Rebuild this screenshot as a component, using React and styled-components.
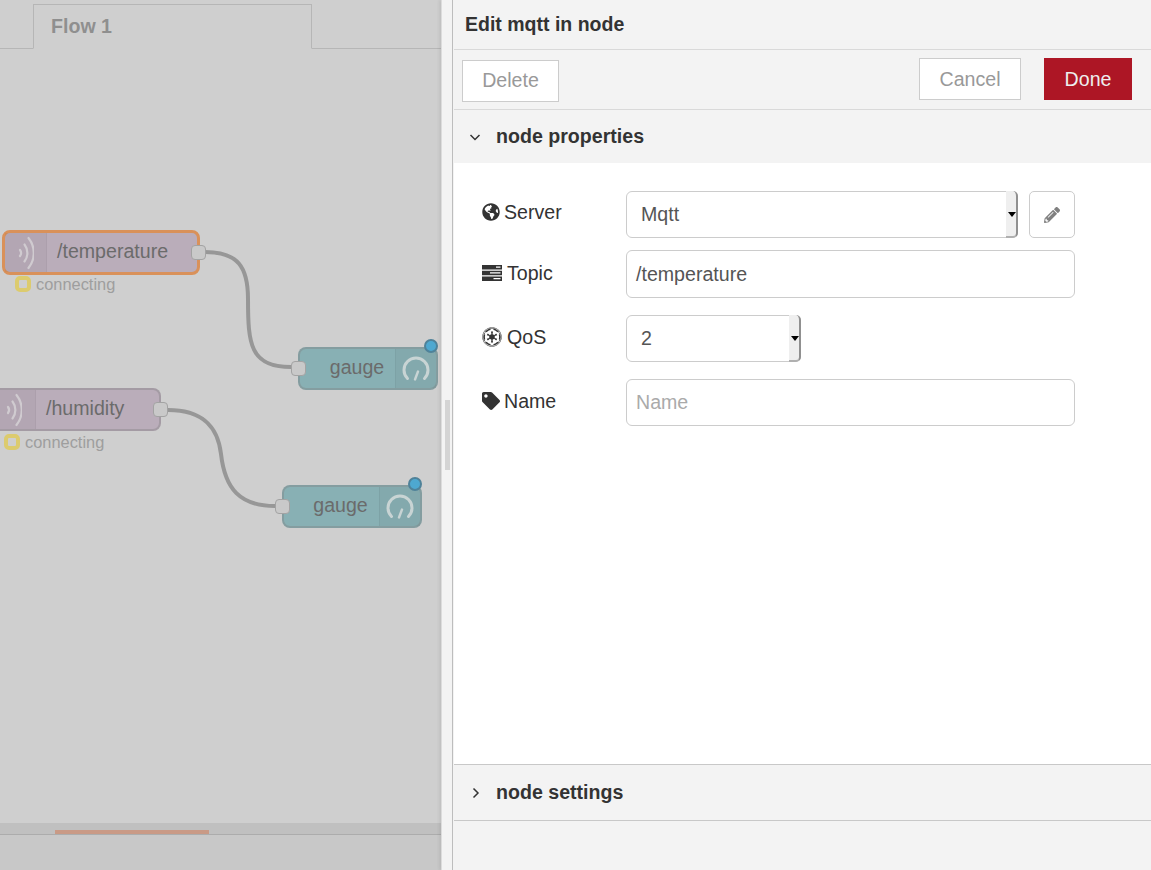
import React from "react";
import styled, { createGlobalStyle } from "styled-components";
import { FaGlobeAmericas, FaEmpire, FaTag, FaPencilAlt } from "react-icons/fa";

const Global = createGlobalStyle`
  html, body { margin: 0; padding: 0; height: 100%; overflow: hidden; }
  body { font-family: "Liberation Sans", Arial, sans-serif; color: #333; }
  * { box-sizing: border-box; }
`;

const Page = styled.div`
  display: flex;
  width: 1151px;
  height: 870px;
  overflow: hidden;
`;

const Workspace = styled.div`
  width: 441px;
  display: flex;
  flex-direction: column;
  background: #cfcfcf;
`;

const TabBar = styled.div`
  height: 49px;
  padding: 4px 0 0 33px;
  border-bottom: 1px solid #b6b6b6;
  display: flex;
`;

const Tab = styled.div`
  width: 279px;
  height: 45px;
  border: 1px solid #b6b6b6;
  border-bottom: 1px solid #cfcfcf;
  padding: 9px 0 0 17px;
  font-size: 19.6px;
  font-weight: 700;
  line-height: 24px;
  color: #8f8f8f;
`;

const Canvas = styled.div`
  position: relative;
  flex: 1;
  overflow: hidden;
  background: #cfcfcf;
`;

const Wires = styled.svg`
  position: absolute;
  left: 0;
  top: 0;
`;

const Node = styled.div`
  position: absolute;
  display: flex;
  border-radius: 8px;
  background: ${(p) => p.$bg};
  border: ${(p) => (p.$selected ? "3px solid #d9915a" : "2px solid rgba(125, 125, 125, 0.36)")};
  color: #6b6b6b;
  font-size: 19.6px;
  line-height: 1;
  align-items: stretch;
`;

const IconCell = styled.div`
  width: ${(p) => p.$w}px;
  flex: none;
  display: flex;
  align-items: center;
  justify-content: center;
  background: rgba(0, 0, 0, 0.035);
  border-${(p) => p.$side}: 1px solid rgba(0, 0, 0, 0.04);
`;

const NodeLabel = styled.div`
  flex: 1;
  display: flex;
  align-items: center;
  justify-content: ${(p) => p.$justify || "flex-start"};
  padding-left: ${(p) => p.$pad || 0}px;
  padding-bottom: 2px;
  white-space: nowrap;
`;

const Port = styled.div`
  position: absolute;
  width: 15px;
  height: 15px;
  border-radius: 4px;
  background: #c9c9c9;
  border: 1px solid #a3a3a3;
  top: 50%;
  margin-top: -8px;
  ${(p) => (p.$side === "left" ? "left: -9px;" : "right: -9px;")}
`;

const Badge = styled.div`
  position: absolute;
  width: 14px;
  height: 14px;
  border-radius: 50%;
  background: #4ea8d0;
  border: 2px solid #4f8299;
  top: -10px;
  right: -2px;
`;

const Status = styled.div`
  position: absolute;
  display: flex;
  align-items: center;
  gap: 5px;
  font-size: 16.4px;
  line-height: 16px;
  color: #9e9e9e;
`;

const StatusDot = styled.div`
  width: 16px;
  height: 16px;
  border-radius: 5px;
  background: #cfcfcf;
  border: 4px solid #dccb6e;
`;

const ScrollTrack = styled.div`
  height: 12px;
  background: #c0c0c0;
  border-bottom: 1px solid #acacac;
  padding: 7px 0 0 55px;
`;

const ScrollThumb = styled.div`
  width: 154px;
  height: 4px;
  background: #c99a86;
`;

const BottomBar = styled.div`
  height: 35px;
  background: #c8c8c8;
`;

const Divider = styled.div`
  position: relative;
  width: 12px;
  background: #f3f3f3;
  border-left: 1px solid #dcdcdc;
  border-right: 1px solid #bdbdbd;
  box-shadow: -2px 0 3px rgba(0, 0, 0, 0.07);
`;

const Handle = styled.div`
  position: absolute;
  left: 3px;
  top: 400px;
  width: 5px;
  height: 70px;
  background: #d4d4d4;
`;

const Editor = styled.div`
  flex: 1;
  display: flex;
  flex-direction: column;
  background: #f3f3f3;
  padding-left: 1px;
`;

const Title = styled.div`
  height: 50px;
  padding: 0 0 0 11px;
  display: flex;
  align-items: center;
  font-size: 19.5px;
  font-weight: 700;
  color: #333;
  border-bottom: 1px solid #d9d9d9;
`;

const Toolbar = styled.div`
  height: 60px;
  display: flex;
  padding: 8px 19px 0 8px;
  border-bottom: 1px solid #d9d9d9;
`;

const Button = styled.button`
  font: inherit;
  font-size: 19.6px;
  height: 42px;
  width: ${(p) => p.$w}px;
  margin-top: ${(p) => p.$top || 0}px;
  margin-left: ${(p) => p.$left || 0}px;
  border: 1px solid ${(p) => (p.$primary ? "#ad1625" : "#cccccc")};
  background: ${(p) => (p.$primary ? "#ad1625" : "#ffffff")};
  color: ${(p) => (p.$primary ? "#eeeeee" : "#999999")};
  padding: 0 0 ${(p) => p.$top || 0}px 0;
`;

const Spacer = styled.div`
  flex: 1;
`;

const SectionHeader = styled.div`
  display: flex;
  align-items: center;
  height: ${(p) => p.$h}px;
  padding-left: 14px;
  gap: 14px;
  font-size: 19.6px;
  font-weight: 700;
  color: #333;
`;

const Chevron = styled.svg`
  width: 14px;
  height: 14px;
  flex: none;
`;

const Form = styled.div`
  flex: 1;
  background: #ffffff;
  padding: 28px 0 0 28px;
  border-bottom: 1px solid #c8c8c8;
`;

const Row = styled.div`
  display: flex;
  align-items: flex-start;
  margin-bottom: ${(p) => p.$mb}px;
`;

const Label = styled.div`
  width: 144px;
  flex: none;
  display: flex;
  align-items: center;
  height: 20px;
  gap: ${(p) => p.$gap || 4}px;
  margin-top: ${(p) => p.$top}px;
  font-size: 19.6px;
  color: #333;
  svg { flex: none; }
`;

const Field = styled.div`
  width: ${(p) => p.$w}px;
  height: ${(p) => p.$h || 47}px;
  border: 1px solid #cccccc;
  border-radius: 6px;
  background: #fff;
  display: flex;
  align-items: center;
  padding-left: ${(p) => p.$pad}px;
  font-size: 19.6px;
  color: ${(p) => (p.$placeholder ? "#aaaaaa" : "#555555")};
`;

const SelectValue = styled.div`
  flex: 1;
`;

const SelectArrow = styled.div`
  position: relative;
  width: 12px;
  height: 47px;
  margin: -1px -1px -1px 0;
  flex: none;
  background: #efefef;
  border-right: 2px solid #909090;
  border-bottom: 2px solid #b0b0b0;
  border-radius: 0 5px 5px 0;
  &::after {
    content: "";
    position: absolute;
    left: 2px;
    top: 21px;
    border-style: solid;
    border-width: 5px 4px 0 4px;
    border-color: #000 transparent transparent transparent;
  }
`;

const EditButton = styled.div`
  width: 46px;
  height: 47px;
  margin-left: 11px;
  border: 1px solid #cccccc;
  border-radius: 5px;
  background: #fff;
  display: flex;
  align-items: center;
  justify-content: center;
  color: #808080;
`;

const SettingsHeader = styled(SectionHeader)`
  border-bottom: 1px solid #c8c8c8;
`;

const Footer = styled.div`
  height: 49px;
`;

const WaveIcon = () => (
  <svg width="16" height="34" viewBox="0 0 16 34" fill="none" stroke="#d0cbd0" strokeWidth="2.2" strokeLinecap="round">
    <path d="M2 14a5 5 0 0 1 0 6" />
    <path d="M6.5 8.5a14 14 0 0 1 0 17" />
    <path d="M10.5 2a24 24 0 0 1 0 30" />
  </svg>
);

const GaugeIcon = () => (
  <svg width="28" height="28" viewBox="0 0 28 28" fill="none" stroke="#c8d4d4" strokeLinecap="round">
    <path d="M5.5 23.5a12 12 0 1 1 17 0" strokeWidth="3" />
    <path d="M13 24.5l3-8" strokeWidth="2.4" />
  </svg>
);

const TasksIcon = () => (
  <svg width="20" height="16" viewBox="0 0 20 16">
    <path fill="#333" d="M0 0h20v4.4H0zM0 5.8h20v4.4H0zM0 11.6h20V16H0z" />
    <path fill="#fff" d="M14 1.4h4.5v1.3H14zM8 7.2h10.5v1.3H8zM11.5 13h7v1.3h-7z" />
  </svg>
);

const ChevronDown = () => (
  <Chevron viewBox="0 0 14 14" fill="none" stroke="#333" strokeWidth="1.5">
    <path d="M2.5 5l4.5 4.5L11.5 5" />
  </Chevron>
);

const ChevronRight = () => (
  <Chevron viewBox="0 0 14 14" fill="none" stroke="#333" strokeWidth="1.5">
    <path d="M5.5 2.5L10 7 5.5 11.5" />
  </Chevron>
);

export default function App() {
  return (
    <Page>
      <Global />
      <Workspace>
        <TabBar>
          <Tab>Flow 1</Tab>
        </TabBar>
        <Canvas>
          <Wires width="441" height="774" fill="none" stroke="#979797" strokeWidth="4">
            <path d="M205 203C238 203 248 218 248 250C248 295 250 318 291 318" />
            <path d="M168 361C205 361 218 380 221 405C225 440 240 457 275 457" />
          </Wires>

          <Node $selected $bg="#baadba" style={{ left: 2, top: 181, width: 198, height: 45 }}>
            <IconCell $w={42} $side="right"><WaveIcon /></IconCell>
            <NodeLabel $pad={10}>/temperature</NodeLabel>
            <Port $side="right" />
          </Node>
          <Status style={{ left: 15, top: 227 }}>
            <StatusDot />connecting
          </Status>

          <Node $bg="#baadba" style={{ left: -10, top: 339, width: 171, height: 43 }}>
            <IconCell $w={44} $side="right"><WaveIcon /></IconCell>
            <NodeLabel $pad={10}>/humidity</NodeLabel>
            <Port $side="right" />
          </Node>
          <Status style={{ left: 4, top: 385 }}>
            <StatusDot />connecting
          </Status>

          <Node $bg="#88b0b4" style={{ left: 298, top: 298, width: 140, height: 43 }}>
            <Port $side="left" />
            <NodeLabel $justify="center" $pad={19}>gauge</NodeLabel>
            <IconCell $w={41} $side="left"><GaugeIcon /></IconCell>
            <Badge />
          </Node>

          <Node $bg="#88b0b4" style={{ left: 282, top: 436, width: 140, height: 43 }}>
            <Port $side="left" />
            <NodeLabel $justify="center" $pad={18}>gauge</NodeLabel>
            <IconCell $w={41} $side="left"><GaugeIcon /></IconCell>
            <Badge />
          </Node>
        </Canvas>
        <ScrollTrack>
          <ScrollThumb />
        </ScrollTrack>
        <BottomBar />
      </Workspace>

      <Divider>
        <Handle />
      </Divider>

      <Editor>
        <Title>Edit mqtt in node</Title>
        <Toolbar>
          <Button $w={97} $top={2}>Delete</Button>
          <Spacer />
          <Button $w={102}>Cancel</Button>
          <Button $w={88} $left={23} $primary>Done</Button>
        </Toolbar>
        <SectionHeader $h={53}>
          <ChevronDown />
          node properties
        </SectionHeader>
        <Form>
          <Row $mb={12}>
            <Label $top={11}><FaGlobeAmericas size={18} />Server</Label>
            <Field $w={392} $pad={14}>
              <SelectValue>Mqtt</SelectValue>
              <SelectArrow />
            </Field>
            <EditButton><FaPencilAlt size={16} /></EditButton>
          </Row>
          <Row $mb={17}>
            <Label $top={13} $gap={5}><TasksIcon />Topic</Label>
            <Field $w={449} $h={48} $pad={9}>/temperature</Field>
          </Row>
          <Row $mb={17}>
            <Label $top={12} $gap={5}><FaEmpire size={20} />QoS</Label>
            <Field $w={175} $pad={14}>
              <SelectValue>2</SelectValue>
              <SelectArrow />
            </Field>
          </Row>
          <Row $mb={0}>
            <Label $top={12}><FaTag size={18} />Name</Label>
            <Field $w={449} $pad={9} $placeholder>Name</Field>
          </Row>
        </Form>
        <SettingsHeader $h={56}>
          <ChevronRight />
          node settings
        </SettingsHeader>
        <Footer />
      </Editor>
    </Page>
  );
}
